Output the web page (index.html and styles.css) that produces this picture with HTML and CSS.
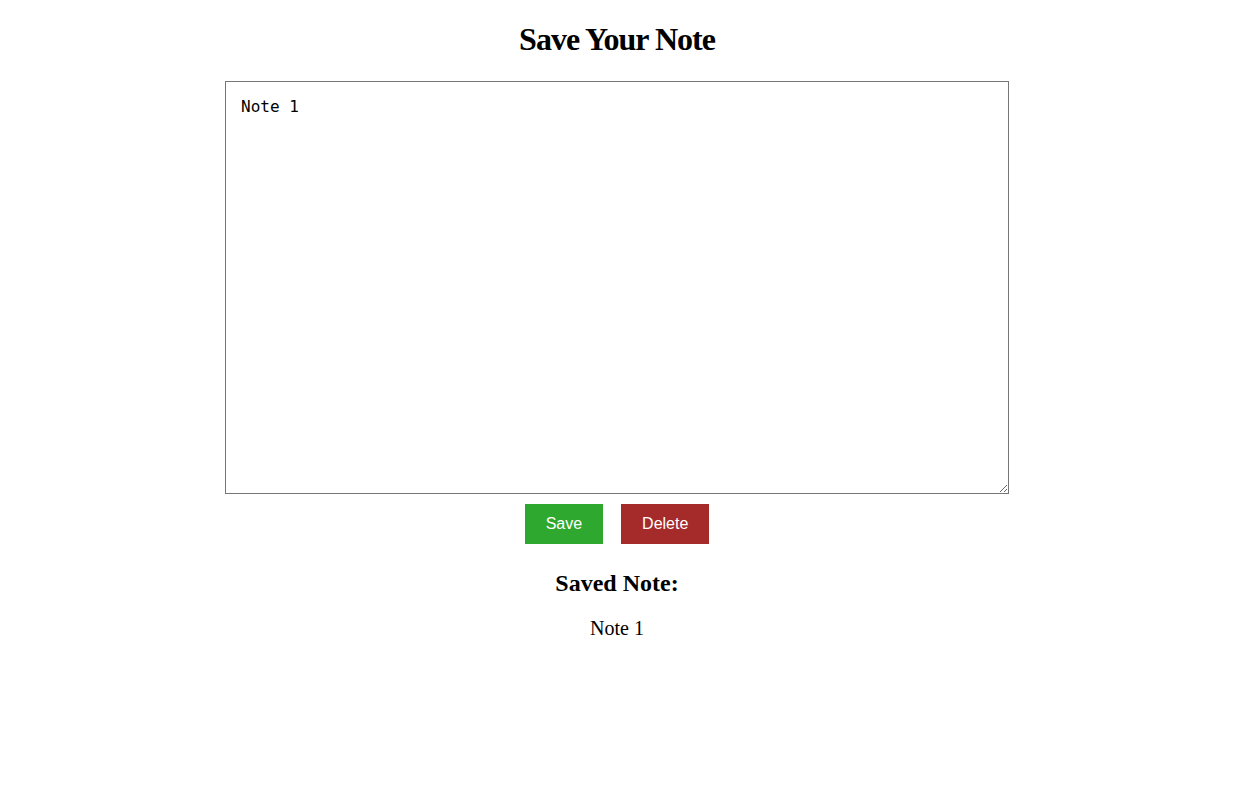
FILE: index.html
```html
<!DOCTYPE html>
<html lang="en">
<head>
<meta charset="utf-8">
<title>Save Your Note</title>
<link rel="stylesheet" href="styles.css">
</head>
<body>
<main class="page">
  <h1 class="title">Save Your Note</h1>
  <textarea class="note-input">Note 1</textarea>
  <div class="actions">
    <button class="btn btn-save" type="button">Save</button>
    <button class="btn btn-delete" type="button">Delete</button>
  </div>
  <h2 class="saved-title">Saved Note:</h2>
  <p class="saved-text">Note 1</p>
</main>
</body>
</html>
```

FILE: styles.css
```css
html, body {
  margin: 0;
  padding: 0;
  background: #ffffff;
}

body {
  font-family: "Liberation Serif", "Times New Roman", serif;
  color: #000000;
}

.page {
  width: 1234px;
  display: flex;
  flex-direction: column;
  align-items: center;
  text-align: center;
}

.title {
  font-size: 32px;
  font-weight: bold;
  letter-spacing: -1px;
  line-height: normal;
  margin: 21px 0 0 0;
}

.note-input {
  box-sizing: border-box;
  width: 784px;
  height: 413px;
  margin-top: 23px;
  padding: 15px;
  border: 1px solid #767676;
  border-radius: 0;
  font-family: "DejaVu Sans Mono", monospace;
  font-size: 16px;
  line-height: normal;
  color: #000000;
  background: #ffffff;
  resize: both;
  text-align: left;
}

.actions {
  display: flex;
  gap: 18px;
  margin-top: 10px;
}

.btn {
  font-family: "Liberation Sans", Arial, sans-serif;
  font-size: 16px;
  line-height: normal;
  padding: 10px 20px;
  color: #ffffff;
  cursor: pointer;
  border-radius: 0;
}

.btn-save {
  background: #2ea82f;
  border: 1px solid #2ea82f;
}

.btn-delete {
  background: #a52a2a;
  border: 1px solid #a52a2a;
}

.saved-title {
  font-size: 24px;
  font-weight: bold;
  line-height: normal;
  margin: 26px 0 0 0;
}

.saved-text {
  font-size: 20px;
  line-height: normal;
  margin: 20px 0 0 0;
}
```
